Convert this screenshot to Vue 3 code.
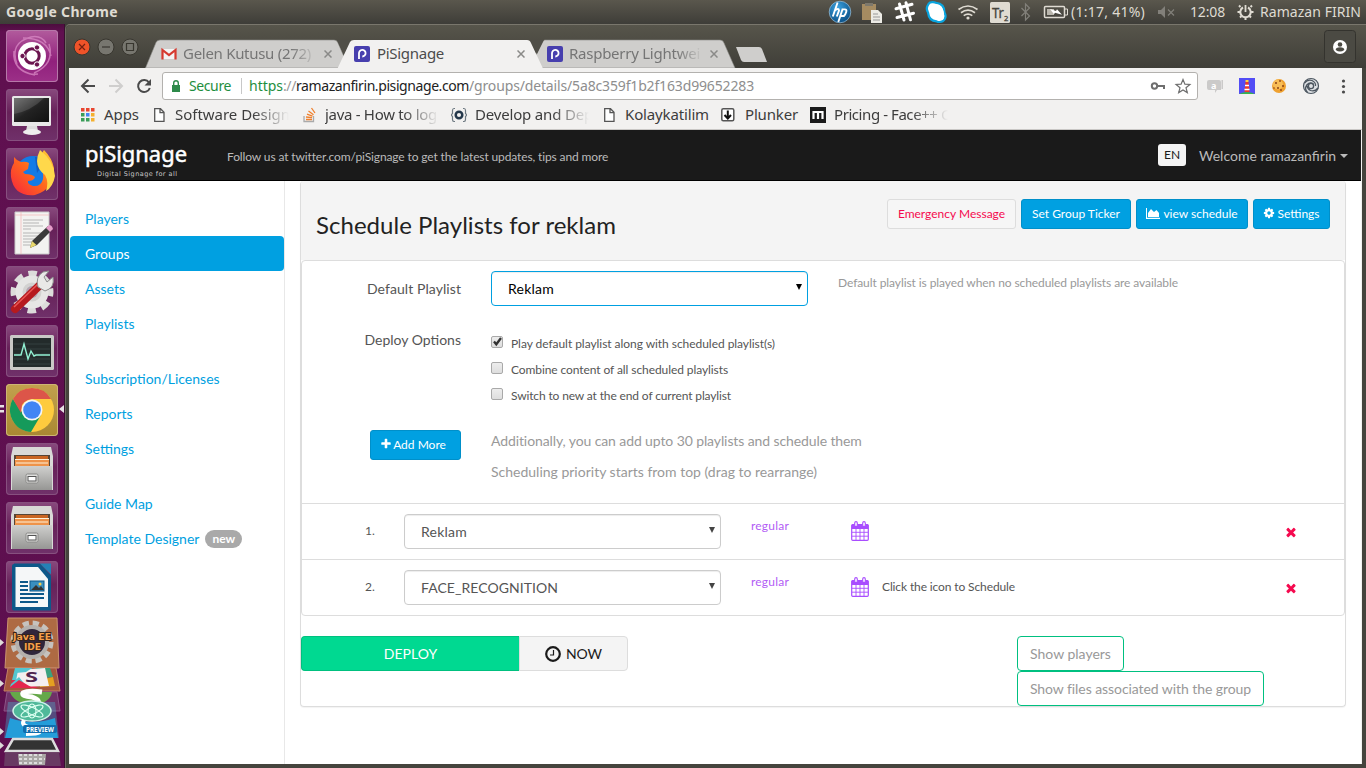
<script setup>
// Spreads a label's letters so that it takes the given width in pixels.
const vFit = {
  mounted(el, { value }) {
    if (!value) return
    const range = document.createRange()
    range.selectNodeContents(el)
    const width = range.getBoundingClientRect().width
    el.style.letterSpacing = (value - width) / el.textContent.length + 'px'
  },
}

const bookmarks = [
  { icon: 'apps', text: 'Apps', fit: 35, iconW: 23, w: 50 },
  { icon: 'page', text: 'Software Design', fit: 115, iconW: 21, w: 128, fade: 112 },
  { icon: 'stack', text: 'java - How to log', fit: 112, iconW: 22, w: 126, fade: 112 },
  { icon: 'brace', text: 'Develop and Dep', fit: 118, iconW: 24, w: 129, fade: 112 },
  { icon: 'page', text: 'Kolaykatilim', fit: 84, iconW: 21, w: 96 },
  { icon: 'plunk', text: 'Plunker', fit: 53, iconW: 24, w: 65 },
  { icon: 'em', text: 'Pricing - Face++ C', fit: 116, iconW: 24, w: 120, fade: 112 },
]

const nav = [
  ['Players', 'Groups', 'Assets', 'Playlists'],
  ['Subscription/Licenses', 'Reports', 'Settings'],
  ['Guide Map', 'Template Designer'],
]

const options = [
  { text: 'Play default playlist along with scheduled playlist(s)', fit: 264, on: true },
  { text: 'Combine content of all scheduled playlists', fit: 217, on: false },
  { text: 'Switch to new at the end of current playlist', fit: 220, on: false },
]

const rows = [
  { name: 'Reklam', fit: 46, note: '' },
  { name: 'FACE_RECOGNITION', fit: 137, note: 'Click the icon to Schedule' },
]

const launcher = ['ubuntu', 'monitor', 'firefox', 'text', 'tools', 'pulse', 'chrome', 'files', 'files', 'writer']
</script>

<template>
  <div class="desktop">
    <header class="panel">
      <span class="app-name"><span v-fit="112">Google Chrome</span></span>
      <svg class="tray-icons" width="241" height="24" viewBox="829 0 241 24">
        <defs>
          <radialGradient id="hp" cx=".4" cy=".3" r=".8"><stop offset="0" stop-color="#3ba2e0" /><stop offset="1" stop-color="#05467c" /></radialGradient>
        </defs>
        <circle cx="840" cy="12" r="10.8" fill="url(#hp)" stroke="#9fc4dd" stroke-width=".7" />
        <g fill="none" stroke="#fff" stroke-width="1.9"><path d="M837.600 2.500l-4.800 14M834.800 10.500q4-3 4.200 0l-2.200 6M842.600 9l-4.300 13M841.800 9.400h3q2.200 0 1.400 2.600t-2.300 4h-3.200" /></g>
        <path d="M862 4h14v16h-14z" fill="#a58b61" /><path d="M865 3h8v3h-8z" fill="#7d786c" /><path d="M871 10h7l4 4v9h-11z" fill="#ecebe5" /><path d="M873 14h5M873 17h7M873 20h7" stroke="#999" />
        <path d="M899.500 4l4.500 16M906 2.800l4.500 17M896 8.800l16-4.500M897 17.500l16.500-4.300" stroke="#fff" stroke-width="3" stroke-linecap="round" fill="none" />
        <g fill="#fff" stroke="#0aa5df" stroke-width="2.200"><path d="M930 2.500q3-1 6 .3 8.500.8 8.500 9.700 2 3.500.3 6.500t-5 3q-2.300 0-3.300-.7-7.500-.3-8.500-8.800-2-3-.8-6t2.800-4z" /></g><path d="M930.500 4q8-1 11.500 4t1 12q-7-.5-10-4t-3-7z" fill="#fff" />
        <g fill="none" stroke="#dfdbd2" stroke-width="1.700"><path d="M958.500 9.500q9.500-7 19 0M961 12.700q7-5 14 0M963.700 15.600q4.300-3 8.600 0" /></g><circle cx="968" cy="18" r="1.600" fill="#dfdbd2" />
        <rect x="990" y="2" width="20" height="21" rx="1.500" fill="#dfdbd2" />
        <text x="992" y="18" font-size="14" fill="#45443d" stroke="#45443d" stroke-width=".3" class="ui" textLength="12" lengthAdjust="spacingAndGlyphs">Tr</text><text x="1004" y="21" font-size="7.500" fill="#45443d" stroke="#45443d" stroke-width=".3" class="ui">2</text>
        <path d="M1021.500 8l8 8-4 4V4l4 4-8 8" fill="none" stroke="#82807a" stroke-width="1.200" />
        <rect x="1044.500" y="6.500" width="20" height="11" rx="1" fill="none" stroke="#dfdbd2" stroke-width="1.500" /><path d="M1065 9h2.500v6h-2.500" fill="none" stroke="#dfdbd2" /><path d="M1047 9h7v6h-7z" fill="#dfdbd2" opacity=".75" /><path d="M1050 9l6 2 1-1.700 5 5.400-7-2-1 1.600z" fill="#fff" />
      </svg>
      <span class="battery"><span v-fit="74">(1:17, 41%)</span></span>
      <svg class="mute" width="18" height="24" viewBox="0 0 18 24"><path d="M1 10h3l4-4v12l-4-4H1z" fill="#82807a" /><path d="M11 9.500l6 6m0-6l-6 6" stroke="#82807a" stroke-width="1.200" /></svg>
      <span class="clock"><span v-fit="35">12:08</span></span>
      <svg class="session" width="17" height="24" viewBox="0 0 17 24"><g fill="none" stroke="#dfdbd2"><path d="M6 7.500a5.200 5.200 0 1 0 5 0" stroke-width="2" /><path d="M8.500 5v7" stroke-width="1.800" /><path d="M3.500 7L2 5.500M13.500 7L15 5.500M3 12H.5M14 12h2.500M4.500 16L3 17.500M12.500 16l1.500 1.500M8.500 17.500V20" stroke-width="2" /></g></svg>
      <span class="user"><span v-fit="101">Ramazan FIRIN</span></span>
    </header>

    <div class="workspace">
      <nav class="launcher">
        <svg width="0" height="0" class="defs">
          <defs>
            <linearGradient id="cab" x1="0" y1="0" x2="0" y2="1"><stop offset="0" stop-color="#d0d0ce" /><stop offset="1" stop-color="#969694" /></linearGradient>
            <linearGradient id="ff" x1="0" y1="1" x2="1" y2="0"><stop offset="0" stop-color="#f7213f" /><stop offset=".5" stop-color="#ff6a1c" /><stop offset="1" stop-color="#ffd93a" /></linearGradient>
            <linearGradient id="scr" x1="0" y1="0" x2="1" y2="1"><stop offset="0" stop-color="#616161" /><stop offset=".5" stop-color="#222" /><stop offset="1" stop-color="#111" /></linearGradient>
          </defs>
        </svg>
        <div v-for="(name, i) in launcher" :key="i" class="tile" :class="name">
          <svg width="52" height="52" viewBox="0 0 52 52">
            <template v-if="name === 'ubuntu'">
              <g fill="none" stroke="#d98bc6" stroke-width="1.500" opacity=".75"><path d="M11 34Q3 13 25 7q10-2 15 6M17 8q24 0 28 18M43 14q6 20-15 29M8 21q-2 20 21 24M14 39q7 6 18 5" /></g>
              <circle cx="26" cy="26" r="14" fill="#fff" /><circle cx="26" cy="26" r="7.200" fill="none" stroke="#6b144f" stroke-width="3" />
              <g fill="#6b144f" stroke="#fff" stroke-width="1"><circle cx="16.500" cy="26" r="2.700" /><circle cx="31" cy="17.500" r="2.700" /><circle cx="31" cy="34.500" r="2.700" /></g>
            </template>
            <template v-else-if="name === 'monitor'">
              <rect x="6" y="7" width="39" height="30" rx="1.500" fill="#e8e8e8" /><rect x="8" y="9" width="35" height="24" fill="url(#scr)" /><path d="M8 25Q25 22 38 9H8z" fill="#fff" opacity=".13" /><path d="M21 37h10l1 5h-12z" fill="#ddd" /><ellipse cx="26" cy="43" rx="9" ry="3" fill="#eee" />
            </template>
            <template v-else-if="name === 'firefox'">
              <circle cx="27" cy="26" r="18" fill="#147be6" /><path d="M29 9q12 0 14 12-8-4-12 4z" fill="#173f9c" opacity=".5" />
              <path d="M8 9q3 4 7 5 5-1 8 1l-1 6-5 3 2 2q7 0 10 3-1 4-7 4-1 3 5 5 8 1 10-7 1-7-3-11l1-13 3-5q8 8 10 18 1 21-19 27Q8 49 5 29 4 21 8 15z" fill="url(#ff)" /><path d="M34 2q14 11 15 26-2 11-9 15 3-9-1-16-8-6-8-14 0-5 3-11z" fill="#ffd84b" />
            </template>
            <template v-else-if="name === 'text'">
              <path d="M9 5h34v42H9z" fill="#f3f3f1" stroke="#c9c9c9" /><path d="M15 5v42M43 8H9" stroke="#f4b4b4" stroke-width=".7" /><path d="M17 13h20M17 16h16M17 19h20M17 22h8M17 26h20M17 29h18M17 32h15M17 35h9M17 38h13" stroke="#b5b5b5" stroke-width="1" /><path d="M24 41l2-7 16-15 4 4-15 15z" fill="#3b3b3b" /><path d="M24 41l2-7 4.500 4z" fill="#e9d96c" /><path d="M40 21l3-3q3 0 4 4l-3 3z" fill="#e59cc9" />
            </template>
            <template v-else-if="name === 'tools'">
              <circle cx="26" cy="26" r="18.500" fill="none" stroke="#dcdcda" stroke-width="6" stroke-dasharray="8.500 6.030" stroke-dashoffset="4.200" /><circle cx="26" cy="26" r="13" fill="#d2d2d0" stroke="#e6e6e4" stroke-width="7" /><circle cx="26" cy="26" r="6" fill="#b2a1ae" />
              <path d="M9 43L34 19" stroke="#b61a1e" stroke-width="8" stroke-linecap="round" /><path d="M8 41L32 18" stroke="#ea5754" stroke-width="1.500" /><path d="M32 21q-3-10 5-15l6-1-5 6 3 5 6-5q2 11-8 14z" fill="#e9e9e7" stroke="#8e8e8e" />
            </template>
            <template v-else-if="name === 'pulse'">
              <rect x="4" y="10" width="44" height="35" rx="1.500" fill="#c9c9c6" /><rect x="7" y="13" width="38" height="29" fill="#232b2b" /><path d="M8 19h36M8 24h36M8 29h36M8 34h36M8 39h36" stroke="#566" stroke-width=".6" opacity=".6" /><path d="M8 30h7l3-11 4 15 3-8 3 5 2-1h14" fill="none" stroke="#92f1d3" stroke-width="1.400" />
            </template>
            <template v-else-if="name === 'chrome'">
              <circle cx="26" cy="26" r="22" fill="#fecb3e" /><path d="M6.900 15A22 22 0 0 0 25 48l10-17-9 4-8-4z" fill="#159a5b" /><path d="M6.900 15A22 22 0 0 1 45.100 15H26q-7 1-10 6l-1 8z" fill="#dc5549" /><circle cx="26" cy="26" r="10.500" fill="#f5f5f5" /><circle cx="26" cy="26" r="8.800" fill="#4285f4" />
            </template>
            <template v-else-if="name === 'files'">
              <path d="M7 4h38l2 9v34H5V13z" fill="#d9d9d7" /><path d="M8 12h36v12H8z" fill="#564536" /><path d="M10 13h32v10H10z" fill="#c96522" /><path d="M9 17h34v7H9z" fill="#ee934a" /><path d="M9 16.500h34M10 20h32" stroke="#fff1d8" stroke-width="1" /><path d="M6 23h40v24H6z" fill="url(#cab)" /><rect x="20" y="31" width="12" height="9" rx="1.500" fill="#dfdfdd" stroke="#898987" /><rect x="22" y="33.500" width="8" height="4.500" fill="#fff" stroke="#555" />
            </template>
            <template v-else>
              <path d="M8 2.500h26l11 12v35H8q-2 0-2-2V5q0-2 2-2z" fill="#0d5889" /><path d="M34 2.500h11v11z" fill="#2381b6" /><path d="M9.500 6h22.500l10 12v28H9.500z" fill="#f5f7f8" /><path d="M14 21h8M14 25h8M14 29h8M14 33h24M14 37h24M14 41h18" stroke="#0d5889" stroke-width="1.800" /><rect x="24" y="20" width="14" height="10" fill="#3a8fc0" stroke="#0d5889" /><path d="M25 29l5-5 3 3 2-2 3 4z" fill="#333" /><circle cx="34" cy="23" r="1.500" fill="#f8ce49" />
            </template>
          </svg>
        </div>
        <svg class="folded" width="65" height="152" viewBox="0 616 65 152">
          <path d="M8 618h49l2 50H5z" fill="#ae6a43" stroke="#c99370" />
          <circle cx="32" cy="642" r="18.500" fill="none" stroke="#c6c2bd" stroke-width="6" stroke-dasharray="6 3.700" /><circle cx="32" cy="642" r="15" fill="#30263b" stroke="#b4b0ac" stroke-width="4" />
          <g class="java" font-size="9" fill="#f5a04a" stroke="#32221b" stroke-width="1.800" paint-order="stroke"><text x="13" y="640" textLength="38" lengthAdjust="spacingAndGlyphs">Java EE</text><text x="24" y="650" textLength="17" lengthAdjust="spacingAndGlyphs">IDE</text></g>
          <path d="M8 668h48l4 23H4z" fill="#a6573c" stroke="#c28266" /><path d="M15 668h17l-8 12H12z" fill="#55c6d0" /><path d="M12 680h12l14 8H10z" fill="#e4264d" /><path d="M36 668h14l3 9-17 2z" fill="#3aa27f" /><path d="M40 680l13-3 2 9-15 1z" fill="#e4a021" /><path d="M18 670l27-2 4 18-34 1z" fill="#f4eff0" /><path d="M15 668h17l-6 4-10 1zM11 684l8-7 8 10H10z" fill="#55c6d0" /><path d="M10 687l9-7 12 7z" fill="#e4264d" /><text x="25" y="682" font-size="14" font-weight="700" fill="#51244e" class="ui" textLength="13" lengthAdjust="spacingAndGlyphs">S</text>
          <path d="M7 692h50l3 19H4z" fill="#773f73" stroke="#a171a0" opacity=".7" /><path d="M10 692h42q-2 12-21 13-17-2-21-13z" fill="#65a849" /><path d="M42 692q-14-2-19 1-2 3 9 4 9 3 5 7" fill="none" stroke="#fff" stroke-width="5" />
          <path d="M8 702h47l4 36H4z" fill="#48b9d7" opacity=".35" /><ellipse cx="32" cy="711" rx="19" ry="10" fill="#50b99a" stroke="#cef2e8" stroke-width="1.500" /><g fill="none" stroke="#dbfff0" stroke-width="1.200"><ellipse cx="32" cy="711" rx="12" ry="3.500" transform="rotate(25 32 711)" /><ellipse cx="32" cy="711" rx="12" ry="3.500" transform="rotate(-25 32 711)" /><ellipse cx="32" cy="711" rx="4" ry="7" /></g>
          <path d="M10 718q22 8 45 0l3 20H5z" fill="#249dd9" /><path d="M24 720q-4 6 9 8 16 6-7 6" fill="none" stroke="#fff" stroke-width="4" /><rect x="23" y="725" width="34" height="8" fill="#126dac" rx="2" /><text x="26" y="732" font-size="6.500" font-weight="700" fill="#fff" class="ui" textLength="28" lengthAdjust="spacingAndGlyphs">PREVIEW</text>
          <path d="M13 739h39l6 12H6z" fill="#333" stroke="#ddd" stroke-width="2.500" /><path d="M5 752h54l2 14H4z" fill="#6c4567" opacity=".8" /><path d="M18 754h28l-1 11H19z" fill="#aaa7a5" /><path d="M19 755h24M19 759h26M19 763h24" stroke="#ddd" stroke-width="2" stroke-dasharray="3 2" />
          <g fill="#dedbd9"><path d="M0 639l4 3.500-4 3.500zM0 680l4 3.500-4 3.500zM0 728l4 3.500-4 3.500zM0 742l4 3.500-4 3.500z" /></g>
        </svg>
        <svg class="running" width="65" height="10" viewBox="0 0 65 10"><path d="M0 1h4v2.500H0zM0 6h4v2.500H0zM64 1v8l-5-4z" fill="#e7e2e5" /></svg>
      </nav>

      <main class="window">
        <div class="titlebar">
          <svg class="tab-shapes" width="1300" height="44" viewBox="66 24 1300 44">
            <path d="M145.500 68L156 42.500q1-2.500 4-2.500h174q3 0 4 3l11 25z" fill="#cfcecc" stroke="#8c8b87" stroke-width=".6" />
            <path d="M530 68l11-24q1-4 4-4h175q3 0 4 3l11 25z" fill="#cfcecc" stroke="#8c8b87" stroke-width=".6" />
            <path d="M337 40l7 15 7-15z" fill="#504f48" /><path d="M530 40l7 14 7-14z" fill="#504f48" />
            <path d="M337.500 68.500L350 42q1-2 4-2h173q3 0 4 3l12 25.500z" fill="#f2f1f0" />
            <path d="M736 47h23q2 0 3 2l5 13h-23q-2 0-3-2z" fill="#cfcecc" />
            <circle cx="82" cy="47" r="8" fill="#ef5329" stroke="#38362f" /><path d="M79 44l6 6m0-6l-6 6" stroke="#732010" stroke-width="1.200" />
            <circle cx="106" cy="47" r="8" fill="#77766f" stroke="#38362f" /><path d="M102 47h8" stroke="#38362f" stroke-width="1.200" />
            <circle cx="130" cy="47" r="8" fill="#77766f" stroke="#38362f" /><path d="M126.500 43.500h7v7h-7z" fill="none" stroke="#38362f" stroke-width="1.200" />
            <rect x="1324.500" y="30.500" width="31" height="32" rx="3" fill="#4b4a43" stroke="#34332e" /><circle cx="1340" cy="47" r="7" fill="#fff" /><circle cx="1340" cy="44.500" r="2.300" fill="#4b4a43" /><path d="M1335.700 50q0-2.700 4.300-2.700t4.300 2.700q-4.300 3-8.600 0z" fill="#4b4a43" />
          </svg>
          <div class="tab first">
            <svg width="16" height="16" viewBox="0 0 16 16"><path d="M2 3h12v10H2z" fill="#f3f3f3" /><path d="M1.500 13.500V4L8 9l6.500-5v9.500" fill="none" stroke="#d63a30" stroke-width="2.200" /></svg>
            <span class="tab-text dim fade-right"><span v-fit="128">Gelen Kutusu (272)</span></span>
            <svg class="x" width="8" height="8" viewBox="0 0 8 8"><path d="M.5.5l7 7m0-7l-7 7" /></svg>
          </div>
          <div class="tab second">
            <svg width="16" height="16" viewBox="0 0 16 16"><rect width="16" height="16" rx="2" fill="#473fae" /><path d="M5 13V7.500A3.300 3.300 0 1 1 8.300 10.500" fill="none" stroke="#fff" stroke-width="1.800" /></svg>
            <span class="tab-text"><span v-fit="67">PiSignage</span></span>
            <svg class="x" width="8" height="8" viewBox="0 0 8 8"><path d="M.5.5l7 7m0-7l-7 7" /></svg>
          </div>
          <div class="tab third">
            <svg width="16" height="16" viewBox="0 0 16 16"><rect width="16" height="16" rx="2" fill="#473fae" /><path d="M5 13V7.500A3.300 3.300 0 1 1 8.300 10.500" fill="none" stroke="#fff" stroke-width="1.800" /></svg>
            <span class="tab-text dim fade-right"><span v-fit="131">Raspberry Lightwei</span></span>
            <svg class="x" width="8" height="8" viewBox="0 0 8 8"><path d="M.5.5l7 7m0-7l-7 7" /></svg>
          </div>
        </div>

        <div class="chrome-body">
          <div class="toolbar">
            <svg class="nav-icons" width="93" height="28" viewBox="69 72 93 28">
              <g fill="none" stroke-width="2"><path d="M95 86H82.500M88.500 79.500L82 86l6.500 6.500" stroke="#4a4a4a" /><path d="M109 86h12.500M115.500 79.500L122 86l-6.500 6.500" stroke="#cfcecd" /><path d="M149 82.500a6 6 0 1 0 .8 5.500" stroke="#4a4a4a" /></g><path d="M151 79v6.500h-6.500z" fill="#4a4a4a" />
            </svg>
            <div class="omnibox">
              <svg width="8" height="12" viewBox="0 0 8 12"><path d="M0 5h8v7H0z" fill="#2d8a4a" /><path d="M1.700 5V3a2.300 2.300 0 0 1 4.600 0v2" fill="none" stroke="#2d8a4a" stroke-width="1.400" /></svg>
              <span class="secure"><span v-fit="42">Secure</span></span>
              <span class="divider"></span>
              <span class="https"><span v-fit="34">https</span></span><span class="slashes"><span v-fit="13">://</span></span><span class="host"><span v-fit="173">ramazanfirin.pisignage.com</span></span><span class="path"><span v-fit="285">/groups/details/5a8c359f1b2f163d99652283</span></span>
              <svg class="key" width="42" height="16" viewBox="1150 78 42 16"><circle cx="1154.500" cy="86" r="2.700" fill="none" stroke="#6e6e6e" stroke-width="2" /><path d="M1157 85h8v4h-2v-2h-6z" fill="#6e6e6e" /><path d="M1183 79.500l1.900 4.700 5 .3-3.900 3.200 1.300 4.900-4.300-2.700-4.300 2.700 1.300-4.900-3.900-3.200 5-.3z" fill="none" stroke="#6e6e6e" stroke-width="1.200" /></svg>
            </div>
            <svg class="ext" width="164" height="28" viewBox="1198 72 164 28">
              <path d="M1209 80h10q2 0 2 2v8h-4l-2 3v-3h-6q-2 0-2-2v-6q0-2 2-2zM1221.500 80h1.500v9h-1.500z" fill="#cbcac9" /><text x="1211" y="89" font-size="9" font-weight="700" fill="#fff" class="ui">a</text>
              <path d="M1239 78h16v16h-16z" fill="#534df5" /><path d="M1239 94q8-4 16 0z" fill="#38b34e" /><path d="M1245.500 82h3l1 10h-5z" fill="#ee3a2b" /><path d="M1245 85.500h4M1244.500 89.500h5" stroke="#fff" stroke-width="1.500" /><path d="M1245.500 80h3v2h-3z" fill="#ffcf39" />
              <circle cx="1279" cy="86" r="7" fill="#efa12f" /><circle cx="1278" cy="84.500" r="5" fill="#f8bd56" /><g fill="#8b4215"><circle cx="1276" cy="83" r="1" /><circle cx="1280" cy="81" r=".9" /><circle cx="1283" cy="86" r="1" /><circle cx="1278" cy="88" r="1" /><circle cx="1281" cy="90" r=".9" /><circle cx="1274" cy="88" r=".8" /></g>
              <circle cx="1311" cy="86" r="7.500" fill="#dde0e3" stroke="#4c5660" stroke-width="1.200" /><g fill="none" stroke="#4c5660" stroke-width="1.300"><circle cx="1311" cy="86" r="2.600" /><path d="M1304.500 83q3-4 7.500-2.500 4 2 3.500 5.500M1307.500 92.500q-3.500-3.500-.8-7.500 3.300-3.500 6.800-1M1318 88q-3 4-7.500 2.500-3.500-2-3.500-5" /></g>
              <g fill="#4a4a4a"><circle cx="1343.500" cy="81" r="1.600" /><circle cx="1343.500" cy="86.500" r="1.600" /><circle cx="1343.500" cy="92" r="1.600" /></g>
            </svg>
          </div>

          <div class="bookmarks">
            <div v-for="(b, i) in bookmarks" :key="i" class="bookmark" :style="{ width: b.iconW + b.w + 'px' }">
              <svg :style="{ marginRight: b.iconW - 16 + 'px' }" width="16" height="16" viewBox="0 0 16 16">
                <template v-if="b.icon === 'apps'">
                  <path d="M0 1h3.500v3.500H0zM5 1h3.500v3.500H5zM10 1h3.500v3.500H10z" fill="#e8452f" /><path d="M0 6h3.500v3.500H0zM0 11h3.500v3.500H0zM5 11h3.500v3.500H5z" fill="#3a9d58" /><path d="M5 6h3.500v3.500H5z" fill="#4285f4" /><path d="M10 6h3.500v3.500H10zM10 11h3.500v3.500H10z" fill="#f4b02e" />
                </template>
                <path v-else-if="b.icon === 'page'" d="M.7 1.700h5.800l3.500 3.500v9.100H.7zM6 2v3.600h4" fill="#fff" stroke="#555" stroke-width="1.300" />
                <template v-else-if="b.icon === 'stack'">
                  <path d="M1 9v5.500h9.500V9" fill="none" stroke="#aaa" stroke-width="1.300" /><path d="M3 12.500h6M3 10l6 .7M4 7.200l5.500 2M5.500 4l5 3.700M8.500 1l3.500 5" stroke="#ef7f2c" stroke-width="1.300" />
                </template>
                <template v-else-if="b.icon === 'brace'">
                  <path d="M4 1.500H3q-1.500 0-1.500 2v3L0 8l1.500 1.500v3q0 2 1.500 2h1M12 1.500h1q1.500 0 1.500 2v3L16 8l-1.500 1.500v3q0 2-1.500 2h-1" fill="none" stroke="#6d7880" stroke-width="1.200" /><circle cx="8" cy="8" r="3.300" fill="none" stroke="#25384b" stroke-width="2.500" />
                </template>
                <template v-else-if="b.icon === 'plunk'">
                  <rect x=".8" y="1.700" width="12" height="12" rx="1.500" fill="#fff" stroke="#555" stroke-width="1.500" /><path d="M6.800 3.500v8M3.500 8l3.300 3.500L10 8" fill="none" stroke="#111" stroke-width="2" />
                </template>
                <template v-else><path d="M0 0h16v16H0z" fill="#1b1b1b" /><path d="M3.500 12V5h9v7M8 5v7" fill="none" stroke="#fff" stroke-width="2.200" /></template>
              </svg>
              <span class="bm-text" :class="{ faded: b.fade }"><span v-fit="b.fit">{{ b.text }}</span></span>
            </div>
          </div>

          <div class="page">
            <header class="topbar">
              <div class="brand">
                <svg width="104" height="34" viewBox="0 0 104 34"><text x="0" y="17" font-size="22.500" fill="#fff" stroke="#fff" stroke-width=".5" class="ui" textLength="102" lengthAdjust="spacingAndGlyphs">piSignage</text><text x="12" y="31" font-size="6.500" fill="#c8c8c8" class="small-brand" textLength="80">Digital Signage for all</text></svg>
              </div>
              <span class="follow"><span v-fit="381">Follow us at twitter.com/piSignage to get the latest updates, tips and more</span></span>
              <span class="lang">EN</span>
              <span class="welcome">Welcome ramazanfirin<i class="caret"></i></span>
            </header>
            <div class="columns">
              <aside class="side">
                <ul v-for="(group, g) in nav" :key="g">
                  <li v-for="item in group" :key="item" :class="{ active: item === 'Groups' }">{{ item }}<span v-if="item === 'Template Designer'" class="badge">new</span></li>
                </ul>
              </aside>
              <section class="card">
                <div class="card-head">
                  <h3><span v-fit="300">Schedule Playlists for reklam</span></h3>
                  <div class="actions">
                    <button class="btn-sm alert">Emergency Message</button>
                    <button class="btn-sm ticker">Set Group Ticker</button>
                    <button class="btn-sm view"><svg width="14" height="11" viewBox="0 0 14 11"><path d="M0 0h1v9.700h13V11H0zM2 9V5l3-4 3 3 2.500-2L13 5v4z" fill="#fff" /></svg>view schedule</button>
                    <button class="btn-sm settings"><svg width="12" height="12" viewBox="0 0 1792 1792"><path fill="#fff" d="M1152 896q0-106-75-181t-181-75-181 75-75 181 75 181 181 75 181-75 75-181zm512-109v222q0 12-8 23t-20 13l-185 28q-19 54-39 91 35 50 107 138 10 12 10 25t-9 23q-27 37-99 108t-94 71q-12 0-26-9l-138-108q-44 23-91 38-16 136-29 186-7 28-36 28h-222q-14 0-24.500-8.500t-11.500-21.500l-28-184q-49-16-90-37l-141 107q-10 9-25 9-14 0-25-11-126-114-165-168-7-10-7-23 0-12 8-23 15-21 51-66.500t54-70.500q-27-50-41-99l-183-27q-13-2-21-12.500t-8-23.500v-222q0-12 8-23t19-13l186-28q14-46 39-92-40-57-107-138-10-12-10-24 0-10 9-23 26-36 98.500-107.500t94.500-71.500q13 0 26 10l138 107q44-23 91-38 16-136 29-186 7-28 36-28h222q14 0 24.500 8.500t11.500 21.500l28 184q49 16 90 37l142-107q9-9 24-9 13 0 25 10 129 119 165 170 7 8 7 22 0 12-8 23-15 21-51 66.500t-54 70.500q26 50 41 98l183 28q13 2 21 12.500t8 23.500z" /></svg>Settings</button>
                  </div>
                </div>

                <div class="inner">
                  <div class="form">
                    <label class="label"><span v-fit="94">Default Playlist</span></label>
                    <div class="select focus"><span v-fit="46">Reklam</span><i></i></div>
                    <p class="hint"><span v-fit="340">Default playlist is played when no scheduled playlists are available</span></p>
                    <label class="label deploy-label">Deploy Options</label>
                    <div class="checks">
                      <div v-for="o in options" :key="o.text" class="check">
                        <span class="box"><svg v-if="o.on" width="11" height="11" viewBox="0 0 11 11"><path d="M2 5.500l2.300 2.800L9 2" fill="none" stroke="#333" stroke-width="2.300" /></svg></span><span v-fit="o.fit">{{ o.text }}</span>
                      </div>
                    </div>
                    <div class="add-cell"><button class="btn-sm add"><svg width="12" height="12" viewBox="0 0 1792 1792"><path fill="#fff" d="M1600 736v192q0 40-28 68t-68 28h-416v416q0 40-28 68t-68 28h-192q-40 0-68-28t-28-68v-416h-416q-40 0-68-28t-28-68v-192q0-40 28-68t68-28h416v-416q0-40 28-68t68-28h192q40 0 68 28t28 68v416h416q40 0 68 28t28 68z" /></svg>Add More</button></div>
                    <div class="info"><p><span v-fit="371">Additionally, you can add upto 30 playlists and schedule them</span></p><p><span v-fit="326">Scheduling priority starts from top (drag to rearrange)</span></p></div>
                  </div>
                  <div v-for="(r, i) in rows" :key="r.name" class="row">
                    <span class="num">{{ i + 1 }}.</span>
                    <div class="select"><span v-fit="r.fit">{{ r.name }}</span><i></i></div>
                    <span class="regular"><span v-fit="38">regular</span></span>
                    <svg class="cal" width="18" height="20" viewBox="0 0 18 20"><path d="M.7 8V4.500q0-1.200 1.200-1.200h14.200q1.200 0 1.200 1.200V8z" fill="#a94dff" /><rect x=".7" y="3.500" width="16.600" height="15.800" rx="1" fill="none" stroke="#a94dff" stroke-width="1.200" /><path d="M1 11.300h16M1 15.200h16M5 7v12M9 7v12M13 7v12" stroke="#a94dff" stroke-width=".9" /><rect x="3.700" y=".6" width="2.600" height="5" rx="1.300" fill="#fff" stroke="#a94dff" stroke-width="1.100" /><rect x="11.700" y=".6" width="2.600" height="5" rx="1.300" fill="#fff" stroke="#a94dff" stroke-width="1.100" /></svg>
                    <span class="note"><span v-fit="r.note ? 133 : 0">{{ r.note }}</span></span>
                    <svg class="del" width="14" height="14" viewBox="0 0 1792 1792"><path fill="#f50a4f" d="M1490 1322q0 40-28 68l-136 136q-28 28-68 28t-68-28l-294-294-294 294q-28 28-68 28t-68-28l-136-136q-28-28-28-68t28-68l294-294-294-294q-28-28-28-68t28-68l136-136q28-28 68-28t68 28l294 294 294-294q28-28 68-28t68 28l136 136q28 28 28 68t-28 68l-294 294 294 294q28 28 28 68z" /></svg>
                  </div>
                </div>

                <div class="foot">
                  <button class="deploy">DEPLOY</button>
                  <button class="now"><svg width="16" height="16" viewBox="0 0 16 16"><circle cx="8" cy="8" r="6.800" fill="none" stroke="#1a1a1a" stroke-width="2.200" /><path d="M8.500 4v5H5" fill="none" stroke="#1a1a1a" stroke-width="1.200" /></svg>NOW</button>
                  <div class="shows"><button>Show players</button><button><span v-fit="221">Show files associated with the group</span></button></div>
                </div>
              </section>
            </div>
          </div>
        </div>
      </main>
    </div>
  </div>
</template>

<style>
body { margin: 0; overflow: hidden; }
</style>

<style scoped>
* { box-sizing: border-box; }
.desktop { width: 1366px; height: 768px; display: flex; flex-direction: column; overflow: hidden; background: #3f3e38; font-family: "Noto Sans", "Open Sans", sans-serif; white-space: nowrap; }
svg { display: block; flex: none; }
.ui { font-family: "Noto Sans", sans-serif; }
.java { font-family: "DejaVu Sans", sans-serif; font-weight: 700; }
.small-brand { font-family: "DejaVu Sans", sans-serif; }
.panel { height: 24px; flex: none; display: flex; align-items: center; padding-left: 6px; background: linear-gradient(#5a574d, #3e3d38); color: #dfdbd2; font-size: 14px; line-height: 24px; }
.app-name { width: 823px; font-weight: 700; font-size: 14px; }
.tray-icons { overflow: visible; }
.battery { width: 87px; padding-left: 1px; }
.clock { width: 47px; margin-left: 15px; }
.user { margin-left: 6px; }
.workspace { display: flex; height: 744px; }
.launcher { width: 65px; flex: none; position: relative; background: linear-gradient(#4c0d3e, #601050 8px, #5d0f4f); padding: 6px 0 0; border-right: 1px solid #38102f; }
.defs { position: absolute; }
.tile { width: 52px; height: 52px; margin: 0 0 7px 6px; border-radius: 4px; background: linear-gradient(#894a7e, #672159 45%, #70316a); box-shadow: inset 0 0 0 1px #87507f; }
.tile.ubuntu { background: linear-gradient(#b25c9d, #91207c 60%, #9c3088); box-shadow: inset 0 0 0 1px #b678a9; }
.tile.chrome { background: linear-gradient(#c2a14e, #a98832); box-shadow: inset 0 0 0 1px #cdb574; }
.folded { position: absolute; left: 0; top: 592px; }
.running { position: absolute; left: 0; top: 380px; }
.window { width: 1301px; height: 744px; background: #45443d; padding-right: 4px; border-left: 1px solid #6a685f; border-top: 1px solid #79766c; border-radius: 5px 0 0 0; }
.titlebar { height: 43px; position: relative; display: flex; align-items: center; background: linear-gradient(#57554b, #3f3e38); border-radius: 5px 0 0 0; width: 1300px; }
.tab-shapes { position: absolute; left: 0; top: -1px; }
.tab { position: relative; display: flex; align-items: center; height: 43px; padding-top: 15px; font-size: 15px; color: #4c4c4c; }
.tab.first { margin-left: 95px; width: 193px; }
.tab.second { width: 193px; }
.tab-text { margin: -2px 0 0 6px; width: 141px; line-height: 24px; }
.second .tab-text { margin-left: 7px; width: 140px; }
.dim { color: #757575; }
.fade-right { -webkit-mask-image: linear-gradient(90deg, #000 108px, transparent 134px); mask-image: linear-gradient(90deg, #000 108px, transparent 134px); }
.x { fill: none; stroke: #8a8a88; stroke-width: 1.5px; }
.chrome-body { margin-left: 3px; width: 1293px; height: 696px; background: #f2f1f0; }
.toolbar { height: 32px; padding-top: 4px; display: flex; }
.omnibox { width: 1036px; height: 28px; border: 1px solid #b3b1ae; border-radius: 3px; background: #fff; display: flex; align-items: center; padding-left: 9px; font-size: 14px; line-height: 26px; }
.secure { color: #1e8e3e; margin-left: 9px; width: 52px; }
.divider { width: 1px; height: 16px; background: #c8c8c8; margin-right: 7px; }
.https { color: #1e8e3e; width: 34px; }
.slashes { color: #999; width: 13px; }
.host { color: #222; width: 173px; }
.path { color: #8e8e8e; width: 681px; }
.bookmarks { height: 30px; display: flex; align-items: center; padding-left: 12px; border-bottom: 1px solid #c9c7c5; font-size: 15px; color: #3d3d3d; }
.bookmark { display: flex; flex: none; align-items: center; }
.bm-text { line-height: 24px; margin-top: -2px; }
.faded { -webkit-mask-image: linear-gradient(90deg, #000 78px, transparent 114px); mask-image: linear-gradient(90deg, #000 78px, transparent 114px); }
.page { margin-left: 1px; width: 1291px; height: 634px; background: #fff; font-family: Lato, sans-serif; font-size: 14px; color: #555; }
.topbar { height: 51px; background: #1a1a1a; border-bottom: 1px solid #000; display: flex; align-items: flex-start; color: #bbb; }
.brand { width: 141px; padding: 15px 0 0 15px; }
.brand svg { overflow: visible; }
.follow { margin-left: 16px; margin-top: 17px; line-height: 20px; font-size: 12px; width: 931px; }
.lang { width: 28px; height: 22px; margin-top: 14px; border-radius: 3px; background: #f4f4f4; color: #1a1a1a; font-size: 12px; line-height: 22px; text-align: center; }
.welcome { margin: 16px 0 0 13px; line-height: 20px; display: flex; align-items: center; }
.caret { border: 4px solid transparent; border-top-color: #bbb; border-bottom: 0; margin-left: 4px; }
.columns { display: flex; height: 583px; }
.side { width: 215px; flex: none; border-right: 1px solid #e8e8e8; padding-top: 20px; }
.side ul { list-style: none; margin: 0 0 20px; padding: 0; }
.side li { height: 35px; line-height: 36px; padding-left: 15px; color: #009fdf; display: flex; align-items: center; }
.side li.active { background: #00a0e1; color: #fff; border-radius: 4px; }
.badge { margin-left: 6px; width: 37px; height: 18px; border-radius: 9px; background: #a9a9a9; color: #fff; font-weight: 700; font-size: 12px; line-height: 17px; text-align: center; }
.card { margin-left: 15px; width: 1046px; height: 526px; border: 1px solid #ddd; border-top: 0; border-radius: 4px; box-shadow: 0 1px 1px rgba(0, 0, 0, .05); }
.card-head { height: 79px; background: #f4f4f4; display: flex; justify-content: space-between; padding: 0 15px; border-radius: 4px 4px 0 0; }
h3 { margin: 30px 0 0; font-size: 24px; line-height: 28px; font-weight: 400; color: #222; }
button { font-family: inherit; margin: 0; padding: 0; }
.actions { display: flex; gap: 5px; padding-top: 18px; }
.btn-sm { height: 30px; display: flex; align-items: center; justify-content: center; gap: 2px; border-radius: 3px; border: 1px solid #008fc9; background: #00a0e1; color: #fff; font-size: 12px; padding-bottom: 2px; }
.alert { width: 129px; background: #f6f6f6; border-color: #ddd; color: #f50a4f; }
.ticker { width: 110px; }
.view { width: 112px; gap: 3px; }
.settings { width: 77px; }
.inner { height: 356px; border: 1px solid #ddd; border-radius: 4px; background: #fff; }
.form { height: 242px; padding-top: 10px; display: grid; grid-template-columns: 159px 317px 1fr; column-gap: 30px; grid-template-rows: 59px 100px 73px; }
.label { text-align: right; line-height: 36px; }
.deploy-label { line-height: 20px; }
.select { width: 317px; height: 35px; border: 1px solid #ccc; border-radius: 4px; background: #fff; padding: 0 8px 0 16px; display: flex; align-items: center; justify-content: space-between; box-shadow: inset 0 1px 1px rgba(0, 0, 0, .075); }
.select i { border: 3px solid transparent; border-top: 6px solid #444; border-bottom: 0; margin: -3px -3px 0 0; }
.focus { border-color: #00a0e1; color: #000; }
.focus i { border-top-color: #000; }
.hint { margin: 3px 0 0; font-size: 12px; line-height: 18px; color: #999; }
.checks { grid-column: 2 / 4; font-size: 12px; }
.check { display: flex; align-items: center; height: 26px; }
.box { width: 12px; height: 12px; margin: -3px 8px 0 0; border: 1px solid #a9a9a9; border-radius: 2px; background: linear-gradient(#ededed, #dedede); display: flex; align-items: center; justify-content: center; }
.add-cell { display: flex; justify-content: flex-end; }
.add { width: 91px; padding-right: 5px; gap: 1px; }
.info { grid-column: 2 / 4; color: #999; padding-top: 1px; }
.info p { margin: 0 0 11px; line-height: 20px; }
.row { height: 56px; border-top: 1px solid #ddd; padding-top: 10px; display: flex; align-items: flex-start; font-size: 12px; }
.row .select { font-size: 14px; }
.num { width: 102px; padding: 9px 0 0 63px; line-height: 15px; }
.regular { width: 100px; margin-left: 30px; color: #b25cf5; line-height: 24px; }
.cal { margin-top: 7px; }
.note { width: 402px; margin-left: 13px; padding-top: 7px; line-height: 20px; }
.del { margin-top: 11px; }
.foot { display: flex; padding-top: 20px; }
.foot button { height: 35px; font-size: 14px; }
.deploy { width: 218px; background: #00d991; color: #fff; border: 1px solid #00c07f; border-right: 0; border-radius: 4px 0 0 4px; }
.now { width: 109px; background: #f4f4f4; color: #1a1a1a; border: 1px solid #ddd; border-radius: 0 4px 4px 0; display: flex; align-items: center; justify-content: center; gap: 5px; }
.shows { margin-left: 389px; display: flex; flex-direction: column; align-items: flex-start; }
.shows button { width: 247px; background: #fff; border: 1px solid #00c080; border-radius: 4px; color: #999; }
.shows button:first-child { width: 107px; }
</style>
